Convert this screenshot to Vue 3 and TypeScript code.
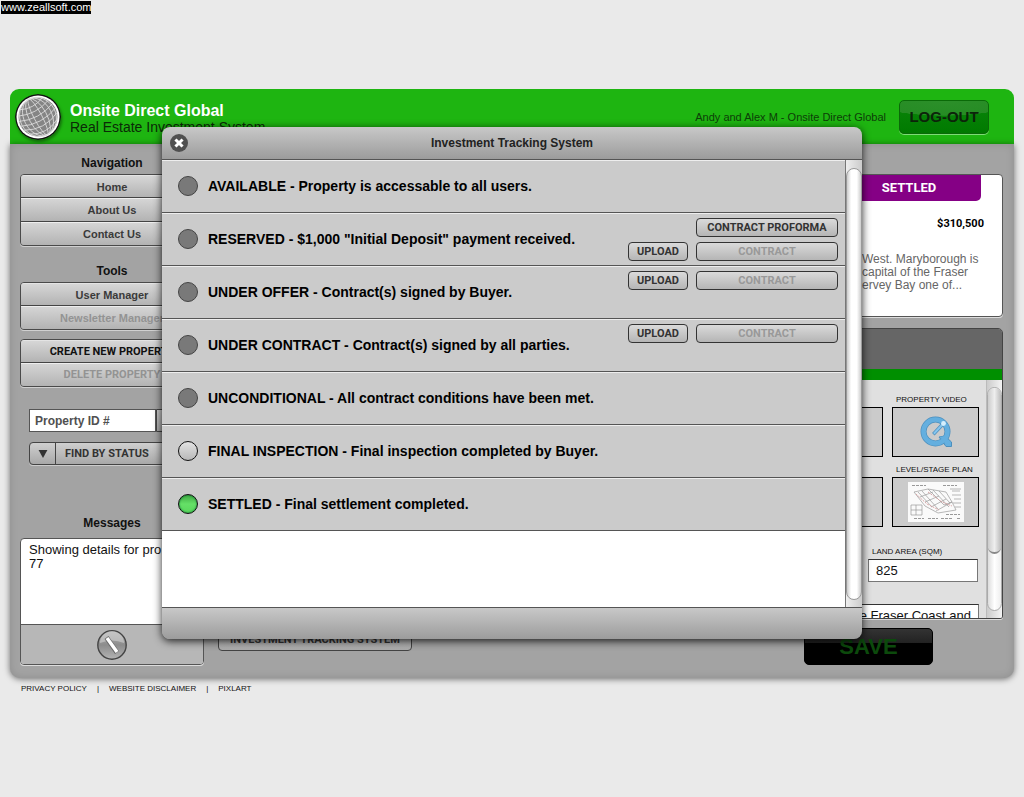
<script setup lang="ts">
import { ref } from 'vue'

interface Action {
  label: string
  kind: 'upload' | 'wide'
  disabled?: boolean
}
interface Stage {
  id: string
  text: string
  enabled: boolean
  actions: Action[][]
}

const upload: Action = { label: 'UPLOAD', kind: 'upload' }
const contract: Action = { label: 'CONTRACT', kind: 'wide', disabled: true }

const stages: Stage[] = [
  { id: 'available', text: 'AVAILABLE - Property is accessable to all users.', enabled: false, actions: [] },
  {
    id: 'reserved',
    text: 'RESERVED - $1,000 "Initial Deposit" payment received.',
    enabled: false,
    actions: [[{ label: 'CONTRACT PROFORMA', kind: 'wide' }], [upload, contract]],
  },
  { id: 'offer', text: 'UNDER OFFER - Contract(s) signed by Buyer.', enabled: false, actions: [[upload, contract]] },
  { id: 'contract', text: 'UNDER CONTRACT - Contract(s) signed by all parties.', enabled: false, actions: [[upload, contract]] },
  { id: 'unconditional', text: 'UNCONDITIONAL - All contract conditions have been met.', enabled: false, actions: [] },
  { id: 'inspection', text: 'FINAL INSPECTION - Final inspection completed by Buyer.', enabled: true, actions: [] },
  { id: 'settled', text: 'SETTLED - Final settlement completed.', enabled: true, actions: [] },
]

const current = ref('settled')
const propertyId = ref('')
const landArea = ref('825')
const description = ref('e Fraser Coast and')
const navigation = ['Home', 'About Us', 'Contact Us']
const footerLinks = ['PRIVACY POLICY', 'WEBSITE DISCLAIMER', 'PIXLART']
</script>

<template>
  <div class="page">
    <div class="watermark">www.zeallsoft.com</div>

    <div class="shell">
      <header class="banner">
        <svg class="globe" viewBox="0 0 46 46" aria-hidden="true">
          <circle cx="23" cy="23" r="23" fill="#111" />
          <circle cx="23" cy="23" r="21.5" fill="#fff" />
          <circle cx="23" cy="23" r="19.5" fill="#858585" />
          <g fill="none" stroke="#dcdcdc" stroke-width="0.8" transform="rotate(-28 23 23)">
            <ellipse cx="23" cy="23" rx="4" ry="20" />
            <ellipse cx="23" cy="23" rx="9" ry="20" />
            <ellipse cx="23" cy="23" rx="14" ry="20" />
            <ellipse cx="23" cy="23" rx="18" ry="20" />
            <path d="M10 8Q23 14 36 8M6 13Q23 20 40 13M4 18Q23 26 42 18M3 23Q23 32 43 23M4 28Q23 38 42 28M7 34Q23 43 39 34" />
          </g>
        </svg>
        <div class="brand">
          <h1>Onsite Direct Global</h1>
          <p>Real Estate Investment System</p>
        </div>
        <span class="user">Andy and Alex M - Onsite Direct Global</span>
        <button class="logout" type="button">LOG-OUT</button>
      </header>

      <div class="body">
        <aside class="side">
          <h2>Navigation</h2>
          <div class="group">
            <button v-for="item in navigation" :key="item" type="button">{{ item }}</button>
          </div>
          <h2 class="tools">Tools</h2>
          <div class="group">
            <button type="button">User Manager</button>
            <button type="button" disabled>Newsletter Manager</button>
          </div>
          <div class="group caps">
            <button type="button" class="strong">CREATE NEW PROPERTY</button>
            <button type="button" disabled>DELETE PROPERTY</button>
          </div>
          <div class="search">
            <input v-model="propertyId" type="text" placeholder="Property ID #" aria-label="Property ID #" />
            <button type="button" aria-label="Find"></button>
          </div>
          <button class="status" type="button">
            <span class="arrow"><svg viewBox="0 0 10 9" aria-hidden="true"><path d="M0 0H10L5 9Z" fill="#333" /></svg></span>
            <span class="status-text">FIND BY STATUS</span>
          </button>
          <h2 class="messages-title">Messages</h2>
          <div class="messages">
            <p>Showing details for pro<br />77</p>
            <div class="messages-bar">
              <button type="button" aria-label="Clear messages">
                <svg viewBox="0 0 30 30" aria-hidden="true">
                  <defs>
                    <linearGradient id="knob" x1="0" y1="0" x2="0" y2="1">
                      <stop offset="0" stop-color="#b5b5b5" />
                      <stop offset="0.5" stop-color="#8c8c8c" />
                      <stop offset="1" stop-color="#b4b4b4" />
                    </linearGradient>
                  </defs>
                  <circle cx="15" cy="15" r="14.2" fill="url(#knob)" stroke="#444" stroke-width="1.4" />
                  <path d="M3 13A12 12 0 0 1 27 13Q15 8 3 13Z" fill="#d0d0d0" opacity="0.6" />
                  <path d="M9.500 7.500L20 22.500" stroke="#666" stroke-width="4.800" />
                  <path d="M10 8L20 22" stroke="#fff" stroke-width="3.400" />
                </svg>
              </button>
            </div>
          </div>
        </aside>

        <main class="main">
          <section class="card">
            <span class="badge">SETTLED</span>
            <strong class="price">$310,500</strong>
            <p class="blurb">West. Maryborough is<br />capital of the Fraser<br />ervey Bay one of...</p>
          </section>

          <section class="panel">
            <div class="panel-head"></div>
            <div class="panel-body">
              <div class="fields">
                <div class="thumbs">
                  <div class="thumb"></div>
                  <figure>
                    <figcaption>PROPERTY VIDEO</figcaption>
                    <div class="thumb">
                      <svg class="qt" viewBox="0 0 32 32" aria-hidden="true">
                        <path d="M19 21L26 30.500H31.500V26L25 20Z" fill="#64afdf" stroke="#4c8fbd" />
                        <circle cx="15.500" cy="15.500" r="12" fill="none" stroke="#4c8fbd" stroke-width="6" />
                        <circle cx="15.500" cy="15.500" r="12" fill="none" stroke="#64afdf" stroke-width="4.600" />
                        <path d="M20 21L25 20L30 26V30H27Z" fill="#64afdf" />
                        <path d="M14.500 17L22 9" stroke="#4c8fbd" stroke-width="3.400" stroke-linecap="square" />
                        <path d="M14.500 17L22 9" stroke="#85c5ee" stroke-width="2" stroke-linecap="square" />
                        <circle cx="23.500" cy="7.500" r="2.400" fill="#d5effd" />
                      </svg>
                    </div>
                  </figure>
                </div>
                <div class="thumbs">
                  <div class="thumb"></div>
                  <figure>
                    <figcaption>LEVEL/STAGE PLAN</figcaption>
                    <div class="thumb">
                      <svg class="plan" viewBox="0 0 56 40" aria-hidden="true">
                        <rect width="56" height="40" fill="#fafafa" />
                        <path d="M4 3.500H18M35 3.500H49M6 36.500H16M20 36.500H30M33 36.500H44M49 36.500H53M38 32.500H52" stroke="#999" stroke-dasharray="3 1" />
                        <g fill="none" stroke="#999" stroke-width="0.7">
                          <path d="M6 10L20 7L36 23L44 20L48 28L30 31L17 24ZM20 7L38 10L44 20M10 10L24 25M14 9L30 27M25 8L41 25M31 9L42 21M12 15L25 10M17 20L31 14M23 25L38 17M28 29L44 20" />
                          <path d="M3 23H14V33H3ZM3 28H14M8 23V33M42 7H53M44 9H52M44 13H53M46 17H53M45 21H53M47 25H53" />
                        </g>
                        <path d="M8 12L19 22L31 28M20 10L34 20L44 24" fill="none" stroke="#d9a5a5" stroke-dasharray="2 1" />
                      </svg>
                    </div>
                  </figure>
                </div>
                <div class="land">
                  <label for="land-area">LAND AREA (SQM)</label>
                  <input id="land-area" v-model="landArea" type="text" />
                </div>
                <input v-model="description" class="description" type="text" aria-label="Description" />
              </div>
              <div class="track"><div class="track-base"><div class="thumb-bar"></div></div></div>
            </div>
          </section>

          <div class="actions">
            <button class="tracking" type="button">INVESTMENT TRACKING SYSTEM</button>
            <button class="save" type="button">SAVE</button>
          </div>
        </main>
      </div>

      <footer class="links">
        <template v-for="(link, i) in footerLinks" :key="link">
          <span v-if="i > 0">|</span>
          <a href="#">{{ link }}</a>
        </template>
      </footer>
    </div>

    <div class="overlay">
      <section class="dialog" role="dialog" aria-labelledby="dialog-title">
        <header class="dialog-head">
          <button type="button" class="close" aria-label="Close">
            <svg viewBox="0 0 18 18" aria-hidden="true">
              <circle cx="9" cy="9" r="9" fill="#505050" />
              <path d="M6.500 6.500L11.500 11.500M11.500 6.500L6.500 11.500" stroke="#fff" stroke-width="3" stroke-linecap="square" />
            </svg>
          </button>
          <h2 id="dialog-title">Investment Tracking System</h2>
        </header>
        <div class="dialog-body">
          <div class="stages">
            <div v-for="stage in stages" :key="stage.id" class="stage">
              <label>
                <input v-model="current" type="radio" name="stage" :value="stage.id" :disabled="!stage.enabled" />
                {{ stage.text }}
              </label>
              <div v-if="stage.actions.length" class="stage-actions">
                <div v-for="(line, n) in stage.actions" :key="n" class="action-line">
                  <button v-for="a in line" :key="a.label" type="button" :class="['pill', a.kind]" :disabled="a.disabled">{{ a.label }}</button>
                </div>
              </div>
            </div>
          </div>
          <div class="scroll"><div class="scroll-thumb"></div></div>
        </div>
        <footer class="dialog-foot"></footer>
      </section>
    </div>
  </div>
</template>

<style>
body {
  margin: 0;
  background: #eaeaea;
}
</style>

<style scoped>
* {
  box-sizing: border-box;
}
.page {
  position: relative;
  min-height: 100vh;
  background: #eaeaea;
  font-family: "Liberation Sans", Arial, sans-serif;
  color: #111;
  overflow: hidden;
}
h1,
h2,
p,
figure {
  margin: 0;
}
button {
  font-family: inherit;
  padding: 0;
  margin: 0;
  white-space: nowrap;
}
input {
  font-family: inherit;
  margin: 0;
  border-radius: 0;
  min-width: 0;
}
svg {
  display: block;
}
.watermark {
  width: max-content;
  height: 13px;
  margin: 1px;
  background: #000;
  color: #fff;
  font-size: 11px;
  line-height: 13px;
}
.shell {
  margin: 75px 10px 0;
}
.banner {
  display: flex;
  align-items: center;
  height: 55px;
  padding: 0 25px 0 5px;
  background: #1eb511;
  border-radius: 9px 9px 0 0;
}
.globe {
  width: 46px;
  height: 46px;
  flex: none;
  border-radius: 50%;
  box-shadow: 1px 2px 3px rgba(0, 0, 0, 0.4);
}
.brand {
  flex: 1;
  padding: 5px 0 0 9px;
}
.brand h1 {
  color: #fff;
  font-size: 16px;
  line-height: 17px;
}
.brand p {
  font-size: 14px;
  line-height: 17px;
  color: #0b2a07;
}
.user {
  font-size: 11px;
  color: #0d3d08;
  margin-right: 13px;
}
.logout {
  width: 90px;
  height: 34px;
  border: 1px solid #0a6a08;
  border-radius: 5px;
  background: radial-gradient(ellipse 80% 46% at 50% 0, #2c8f2a 0, #268c24 98%, transparent 100%), linear-gradient(#0a850a, #007a00);
  box-shadow: 0 1px 0 #7ddc75;
  font-size: 15px;
  font-weight: bold;
  color: #0c240a;
}
.body {
  display: grid;
  grid-template-columns: 184px 1fr;
  gap: 14px;
  padding: 0 11px 13px 10px;
  background: #a3a3a3;
  border-radius: 0 0 10px 10px;
  box-shadow: 0 1px 6px rgba(0, 0, 0, 0.55), inset 0 0 8px rgba(0, 0, 0, 0.12);
}
.side h2 {
  font-size: 12px;
  line-height: 16px;
  text-align: center;
  padding: 11px 0 3px;
}
.side h2.tools {
  padding-top: 17px;
}
.group {
  border: 1px solid #4a4a4a;
  border-radius: 4px;
  overflow: hidden;
  box-shadow: 0 1px 0 #d0d0d0;
}
.group button {
  display: block;
  width: 100%;
  height: 22px;
  border: 0;
  border-top: 1px solid #e4e4e4;
  background: linear-gradient(#d6d6d6, #b3b3b3);
  font-size: 11px;
  font-weight: bold;
  color: #3a3a3a;
}
.group button + button {
  height: 24px;
  border-top-color: #444;
  box-shadow: inset 0 1px 0 #eee;
}
.group button:disabled {
  color: #939393;
}
.caps {
  margin-top: 9px;
}
.caps button,
.status-text,
.pill,
.tracking {
  font-family: Roboto, "Liberation Sans", sans-serif;
  font-size: 11px;
  font-weight: bold;
}
.caps button.strong {
  color: #111;
}
.search {
  display: flex;
  margin: 22px 9px 10px;
  height: 23px;
}
.search input {
  width: 127px;
  padding: 0 5px;
  border: 1px solid #555;
  background: #fff;
  font-size: 12px;
  font-weight: bold;
}
.search input::placeholder {
  color: #505050;
  opacity: 1;
}
.search button {
  flex: 1;
  border: 1px solid #444;
  border-radius: 0 4px 4px 0;
  background: linear-gradient(#ccc, #aaa);
}
.status {
  display: flex;
  align-items: stretch;
  width: 166px;
  height: 23px;
  margin: 0 9px;
  border: 1px solid #444;
  border-radius: 4px;
  background: linear-gradient(#cfcfcf, #a8a8a8);
  box-shadow: 0 1px 0 #ccc;
  color: #333;
}
.arrow {
  display: grid;
  place-items: center;
  width: 26px;
  border-right: 1px solid #444;
}
.arrow svg {
  width: 10px;
  height: 8px;
}
.status-text {
  padding-left: 9px;
  line-height: 21px;
}
.side h2.messages-title {
  padding: 50px 0 7px;
}
.messages {
  border: 1px solid #555;
  border-radius: 4px;
  background: #fff;
  box-shadow: 0 1px 0 #ddd;
  overflow: hidden;
}
.messages p {
  height: 85px;
  padding: 4px 8px;
  font-size: 13px;
  line-height: 14px;
  white-space: nowrap;
}
.messages-bar {
  display: grid;
  place-items: center;
  height: 40px;
  border-top: 1px solid #555;
  background: #b7b7b7;
}
.messages-bar button {
  width: 30px;
  height: 30px;
  border: 0;
  background: none;
}
.main {
  padding-top: 30px;
  min-width: 0;
}
.card {
  display: flex;
  flex-direction: column;
  align-items: flex-end;
  height: 143px;
  border: 1px solid #555;
  border-radius: 4px;
  background: #fff;
  box-shadow: 0 1px 0 #ddd;
}
.badge {
  width: 144px;
  height: 26px;
  margin-right: 21px;
  border-radius: 0 0 5px 5px;
  background: #850085;
  color: #fff;
  font-family: Roboto, "Liberation Sans", sans-serif;
  font-size: 13px;
  font-weight: bold;
  line-height: 25px;
  text-align: center;
}
.price {
  margin: 15px 18px 0 0;
  font-family: Roboto, "Liberation Sans", sans-serif;
  font-size: 11px;
  line-height: 16px;
  color: #000;
}
.blurb {
  width: 140px;
  margin-top: 21px;
  font-size: 12px;
  line-height: 13px;
  color: #666;
}
.panel {
  margin-top: 11px;
  border: 1px solid #444;
  border-radius: 5px 5px 3px 3px;
  overflow: hidden;
  box-shadow: 0 1px 0 #ddd;
}
.panel-head {
  height: 51px;
  background: #666;
  border-bottom: 11px solid #008f00;
}
.panel-body {
  display: flex;
  height: 238px;
  background: #e0e0e0;
}
.fields {
  flex: 1;
  display: flex;
  flex-direction: column;
  align-items: flex-end;
  padding: 13px 7px 0 0;
  overflow: hidden;
}
.thumbs {
  display: flex;
  align-items: flex-end;
  gap: 9px;
  margin-bottom: 6px;
}
.thumbs figure {
  width: 87px;
}
.thumb {
  display: grid;
  place-items: center;
  width: 87px;
  height: 50px;
  border: 1px solid #000;
  background: #cbcbcb;
}
figcaption,
.land label,
.links {
  font-size: 8px;
  line-height: 14px;
  color: #111;
  white-space: nowrap;
}
figcaption {
  padding-left: 4px;
}
.qt {
  width: 32px;
  height: 32px;
}
.plan {
  width: 56px;
  height: 40px;
}
.land {
  display: flex;
  flex-direction: column;
  width: 110px;
  margin: 12px 1px 22px 0;
}
.land label {
  padding-left: 4px;
}
.land input,
.description {
  height: 23px;
  padding: 0 7px;
  border: 1px solid #777;
  border-top-color: #333;
  background: #fff;
  font-size: 13px;
  color: #111;
}
.description {
  width: 200px;
  flex: none;
  text-align: right;
}
.track {
  width: 16px;
  flex: none;
  border-left: 1px solid #bbb;
  background: linear-gradient(90deg, #ccc, #f4f4f4);
  padding: 7px 0;
}
.track-base {
  height: 224px;
  border: 1px solid #aaa;
  border-radius: 8px;
  background: linear-gradient(90deg, #ddd, #fff 50%, #eee);
}
.thumb-bar {
  height: 166px;
  border-bottom: 2px solid #888;
  border-radius: 8px;
  background: linear-gradient(90deg, #ccc, #eee 50%, #bbb);
}
.actions {
  display: flex;
  justify-content: space-between;
  align-items: flex-start;
  padding-right: 70px;
  margin-top: 9px;
}
.tracking {
  width: 194px;
  height: 23px;
  border: 1px solid #444;
  border-radius: 4px;
  background: linear-gradient(#ccc, #aaa);
  color: #333;
}
.save {
  width: 129px;
  height: 37px;
  border: 1px solid #000;
  border-radius: 5px;
  background: linear-gradient(#333, #222) 0 0 / 100% 14px no-repeat #000;
  font-size: 22px;
  font-weight: bold;
  color: #0c4a0c;
}
.links {
  display: flex;
  gap: 10px;
  padding: 4px 11px;
}
.links a {
  color: #111;
  text-decoration: none;
}
.overlay {
  position: absolute;
  inset: 0;
  display: flex;
  justify-content: center;
  align-items: flex-start;
  padding: 127px 20px 20px;
}
.dialog {
  width: 100%;
  max-width: 700px;
  border-radius: 8px;
  overflow: hidden;
  box-shadow: 0 2px 9px rgba(0, 0, 0, 0.85);
}
.dialog-head {
  display: grid;
  grid-template-columns: 18px 1fr 18px;
  align-items: center;
  height: 33px;
  padding: 0 8px;
  border-bottom: 1px solid #555;
  background: linear-gradient(#c8c8c8, #9c9c9c);
}
.dialog-head h2 {
  font-size: 12px;
  line-height: 16px;
  text-align: center;
  color: #222;
}
.close {
  width: 18px;
  height: 18px;
  border: 0;
  background: none;
}
.dialog-body {
  display: flex;
  background: #fff;
}
.stages {
  flex: 1;
  padding-bottom: 76px;
}
.stage {
  display: flex;
  justify-content: space-between;
  min-height: 53px;
  padding: 0 7px 0 16px;
  border-bottom: 1px solid #555;
  background: #cbcbcb;
  box-shadow: inset 0 1px 0 #eee;
}
.stage label {
  display: flex;
  align-items: center;
  gap: 10px;
  font-size: 14px;
  font-weight: bold;
  color: #000;
}
.stage input {
  appearance: none;
  width: 20px;
  height: 20px;
  flex: none;
  border: 1px solid #111;
  border-radius: 50%;
  background: linear-gradient(#e2e2e2, #b8b8b8);
}
.stage input:disabled {
  border-color: #444;
  background: #797979;
}
.stage input:checked {
  background: linear-gradient(#3faa42, #65e067 50%, #5ad75c);
  box-shadow: inset 0 0 2px #063;
}
.stage-actions {
  display: flex;
  flex-direction: column;
  align-items: flex-end;
  gap: 5px;
  padding-top: 5px;
}
.action-line {
  display: flex;
  gap: 8px;
}
.pill {
  height: 19px;
  border: 1px solid #333;
  border-radius: 4px;
  background: linear-gradient(#dadada, #b5b5b5);
  color: #333;
}
.pill.upload {
  width: 60px;
}
.pill.wide {
  width: 142px;
}
.pill:disabled {
  color: #999;
}
.scroll {
  display: flex;
  width: 17px;
  padding: 8px 0 7px;
  border-left: 1px solid #777;
  background: linear-gradient(90deg, #eee, #ccc);
}
.scroll-thumb {
  flex: 1;
  border: 1px solid #999;
  border-radius: 8px;
  background: linear-gradient(90deg, #ccc, #fff 30%, #fff 70%, #ccc);
}
.dialog-foot {
  height: 32px;
  border-top: 1px solid #555;
  background: linear-gradient(#c8c8c8, #9c9c9c);
}
</style>
